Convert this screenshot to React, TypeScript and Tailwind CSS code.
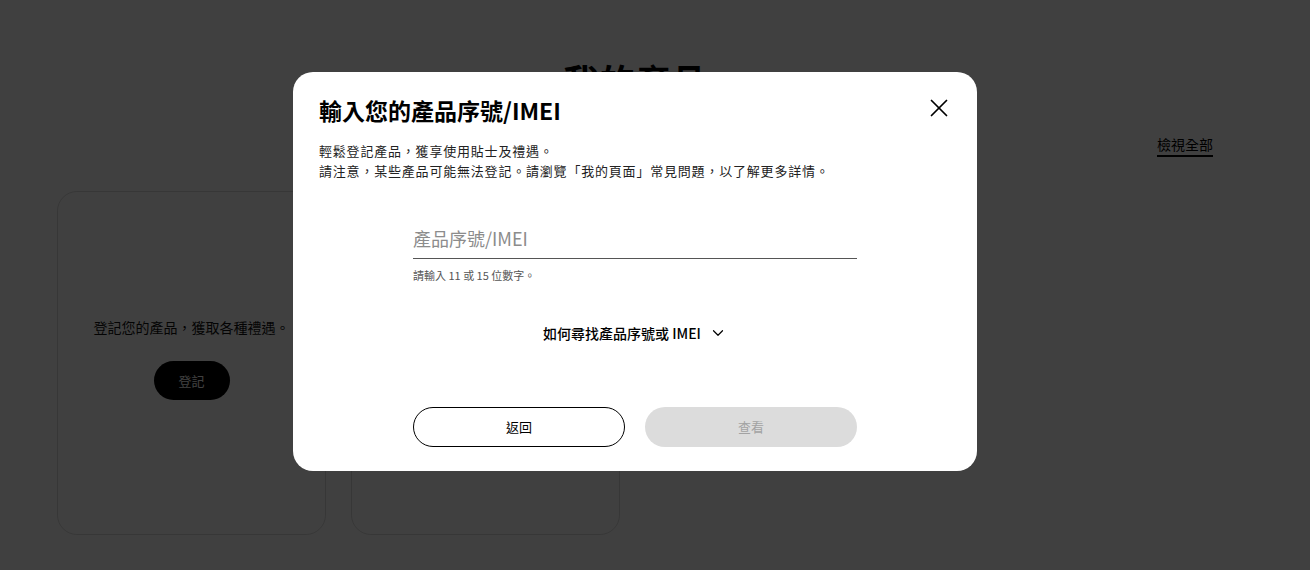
import { ChevronDown, X } from "lucide-react";

const font = {
  fontFamily: '"Noto Sans CJK TC", "Noto Sans", sans-serif',
};

function ProductCard({ empty }: { empty?: boolean }) {
  return (
    <div className="w-[269px] h-[344px] rounded-[20px] border border-[#dcdcdc] bg-white flex flex-col items-center pt-[125px]">
      {!empty && (
        <>
          <p className="text-[14px] leading-[20px] text-[#111]">登記您的產品，獲取各種禮遇。</p>
          <button className="mt-[24px] w-[76px] h-[39px] rounded-full bg-black text-white text-[13px]">
            登記
          </button>
        </>
      )}
    </div>
  );
}

export default function App() {
  return (
    <div className="relative w-[1310px] h-[570px] overflow-hidden bg-white" style={font}>
      {/* page under the dialog */}
      <div className="w-[1270px] pt-[56px]">
        <h1 className="text-center text-[36px] leading-[48px] font-bold text-black">我的產品</h1>
        <div className="mx-[57px] mt-[30px] flex justify-end">
          <a className="text-[14px] leading-[20px] text-black border-b-2 border-black pb-[1px]">檢視全部</a>
        </div>
        <div className="mx-[57px] mt-[34px] flex gap-[25px]">
          <ProductCard />
          <ProductCard empty />
        </div>
      </div>

      {/* dim overlay */}
      <div className="absolute inset-0 bg-black/75" />

      {/* dialog */}
      <div className="absolute left-[293px] top-[72px] w-[684px] h-[399px] rounded-[20px] bg-white px-[26px] pt-[23px] pb-[24px] flex flex-col">
        <div className="flex items-start justify-between">
          <h2 className="text-[23px] leading-[30px] font-bold text-black">輸入您的產品序號/IMEI</h2>
          <button className="mt-[-2px] mr-[-3px] text-black">
            <X size={30} strokeWidth={1.4} />
          </button>
        </div>
        <div className="mt-[16px] text-[13px] leading-[20px] tracking-[0.8px] text-[#222]">
          <p>輕鬆登記產品，獲享使用貼士及禮遇。</p>
          <p>請注意，某些產品可能無法登記。請瀏覽「我的頁面」常見問題，以了解更多詳情。</p>
        </div>

        <div className="mx-auto w-[444px] mt-[37px]">
          <input
            placeholder="產品序號/IMEI"
            className="w-full h-[41px] border-b border-[#555] text-[18px] text-black placeholder:text-[#8c8c8c] outline-none"
          />
          <p className="mt-[9px] text-[11px] leading-[14px] text-[#555]">請輸入 11 或 15 位數字。</p>

          <button className="mt-[41px] mx-auto flex items-center gap-[8px] text-[14px] leading-[20px] font-medium text-black">
            如何尋找產品序號或 IMEI
            <ChevronDown size={18} strokeWidth={1.6} />
          </button>

          <div className="mt-[64px] flex gap-[20px]">
            <button className="w-[212px] h-[40px] rounded-full border border-black text-[13px] text-black">
              返回
            </button>
            <button className="w-[212px] h-[40px] rounded-full bg-[#dcdcdc] text-[13px] text-[#a3a3a3]">
              查看
            </button>
          </div>
        </div>
      </div>
    </div>
  );
}
